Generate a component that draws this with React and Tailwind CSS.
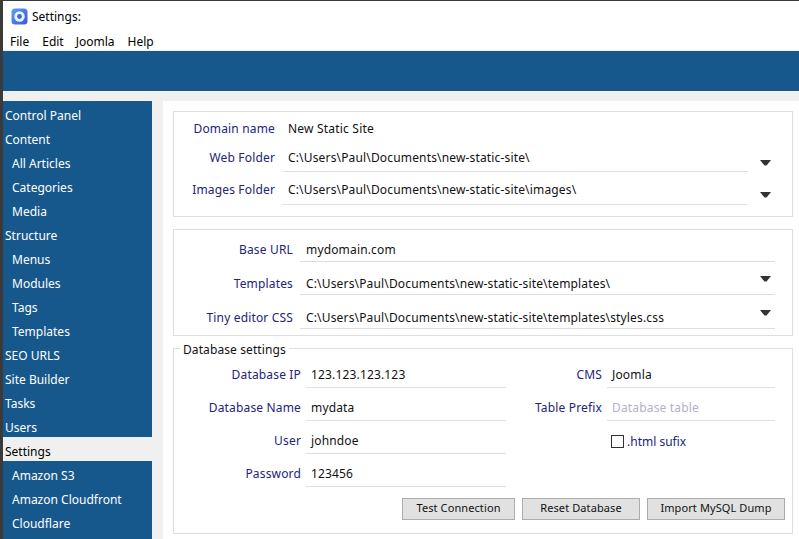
const navItems = [
  { label: 'Control Panel' },
  { label: 'Content' },
  { label: 'All Articles', sub: true },
  { label: 'Categories', sub: true },
  { label: 'Media', sub: true },
  { label: 'Structure' },
  { label: 'Menus', sub: true },
  { label: 'Modules', sub: true },
  { label: 'Tags', sub: true },
  { label: 'Templates', sub: true },
  { label: 'SEO URLS' },
  { label: 'Site Builder' },
  { label: 'Tasks' },
  { label: 'Users' },
  { label: 'Settings', active: true },
  { label: 'Amazon S3', sub: true },
  { label: 'Amazon Cloudfront', sub: true },
  { label: 'Cloudflare', sub: true },
];

function Logo() {
  return (
    <svg width="17" height="17" viewBox="0 0 17 17" className="shrink-0">
      <defs>
        <linearGradient id="logoBg" x1="0" y1="0" x2="1" y2="1">
          <stop offset="0" stopColor="#5aa2ef" />
          <stop offset="1" stopColor="#3b55d8" />
        </linearGradient>
      </defs>
      <rect x="0.5" y="0.5" width="16" height="16" rx="3.5" fill="url(#logoBg)" />
      <circle cx="8.5" cy="8.5" r="5.2" fill="#e9f1fd" />
      <circle cx="8.5" cy="8.5" r="2.4" fill="#3f68d6" />
    </svg>
  );
}

function Arrow({ className }) {
  return (
    <svg width="11" height="6" viewBox="0 0 11 6" className={className}>
      <polygon points="0,0 11,0 6.5,5.5 4.5,5.5" fill="#333333" />
    </svg>
  );
}

function Label({ className = '', children }) {
  return (
    <div className={`shrink-0 pt-px text-right leading-[22px] tracking-[0.16px] whitespace-nowrap text-[#23237a] ${className}`}>
      {children}
    </div>
  );
}

function Field({ className = '', children }) {
  return (
    <div className={`border-b border-[#dedede] pt-px leading-[22px] tracking-[0.16px] whitespace-nowrap text-[#111111] ${className}`}>
      {children}
    </div>
  );
}

function DbRow({ label, value }) {
  return (
    <div className="flex">
      <Label className="w-[127px]">{label}</Label>
      <Field className="ml-[5px] h-[25px] w-[200px] pl-[5px]">{value}</Field>
    </div>
  );
}

export default function App() {
  return (
    <div
      className="flex h-[539px] w-[799px] overflow-hidden bg-[#3a3a3a] pt-px pl-[3px] text-[12px] text-black"
      style={{ fontFamily: '"Noto Sans", "Open Sans", sans-serif' }}
    >
      <div className="flex min-w-0 flex-1 flex-col bg-[#f0f0f0]">
        <div className="flex h-[32px] items-start bg-white pt-[7px] pl-[8px]">
          <Logo />
          <span className="ml-[4px] pt-px leading-[16px]">Settings:</span>
        </div>
        <div className="flex h-[17px] gap-[13px] bg-white pl-[7px] leading-[17px]">
          <span>File</span>
          <span>Edit</span>
          <span className="-ml-px">Joomla</span>
          <span>Help</span>
        </div>
        <div className="h-px bg-[#f0f0f0]" />
        <div className="h-[40px] bg-[#17588c]" />

        <div className="mt-[10px] flex min-h-0 flex-1">
          <nav className="w-[149px] shrink-0 bg-[#17588c] text-white">
            {navItems.map((item) => (
              <div
                key={item.label}
                className={`h-[24px] pt-[4px] leading-[22px] ${item.sub ? 'pl-[9px]' : 'pl-[2px]'} ${item.active ? 'bg-[#f0f0f0] text-black' : ''}`}
              >
                {item.label}
              </div>
            ))}
          </nav>

          <main className="ml-[11px] min-w-0 flex-1 bg-white pt-[10px] pl-[10px]">
            <section className="h-[106px] w-[620px] border border-[#dedede] pt-[5px]">
              <div className="flex">
                <Label className="w-[101px]">Domain name</Label>
                <div className="ml-[13px] pt-px leading-[22px] tracking-[0.2px] text-[#111111]">New Static Site</div>
              </div>
              <div className="mt-[6px] flex">
                <Label className="w-[101px]">Web Folder</Label>
                <Field className="ml-[8px] h-[26px] w-[465px] pl-[5px]">C:\Users\Paul\Documents\new-static-site\</Field>
                <Arrow className="mt-[14px] ml-[12px]" />
              </div>
              <div className="mt-[6px] flex">
                <Label className="w-[101px]">Images Folder</Label>
                <Field className="ml-[7px] h-[27px] w-[465px] pl-[6px]">C:\Users\Paul\Documents\new-static-site\images\</Field>
                <Arrow className="mt-[14px] ml-[13px]" />
              </div>
            </section>

            <section className="mt-[12px] h-[107px] w-[620px] border border-[#dedede] pt-[8px]">
              <div className="flex">
                <Label className="w-[119px]">Base URL</Label>
                <Field className="ml-[7px] h-[24px] w-[475px] pl-[6px]">mydomain.com</Field>
              </div>
              <div className="mt-[10px] flex">
                <Label className="w-[119px]">Templates</Label>
                <div className="relative ml-[7px] w-[475px]">
                  <Field className="h-[23px] pl-[6px]">C:\Users\Paul\Documents\new-static-site\templates\</Field>
                  <Arrow className="absolute top-[4px] left-[460px]" />
                </div>
              </div>
              <div className="mt-[11px] flex">
                <Label className="w-[119px]">Tiny editor CSS</Label>
                <div className="relative ml-[7px] w-[475px]">
                  <Field className="h-[23px] pl-[6px]">C:\Users\Paul\Documents\new-static-site\templates\styles.css</Field>
                  <Arrow className="absolute top-[4px] left-[460px]" />
                </div>
              </div>
            </section>

            <section className="relative mt-[12px] h-[186px] w-[620px] border border-[#dedede] pt-[14px]">
              <div className="absolute -top-[9px] left-[6px] bg-white px-[3px] leading-[20px] tracking-[0.1px] text-[#111111]">
                Database settings
              </div>
              <div className="flex">
                <div className="flex w-[332px] shrink-0 flex-col gap-[8px]">
                  <DbRow label="Database IP" value="123.123.123.123" />
                  <DbRow label="Database Name" value="mydata" />
                  <DbRow label="User" value="johndoe" />
                  <DbRow label="Password" value="123456" />
                </div>
                <div className="flex flex-col gap-[8px]">
                  <div className="flex">
                    <Label className="w-[96px] text-[#7d8aa6]">CMS</Label>
                    <Field className="ml-[5px] h-[25px] w-[168px] pl-[5px]">Joomla</Field>
                  </div>
                  <div className="flex">
                    <Label className="w-[96px] text-[#7d8aa6]">Table Prefix</Label>
                    <Field className="ml-[5px] h-[25px] w-[168px] pl-[5px] text-[#b4b0c8]">Database table</Field>
                  </div>
                  <div className="ml-[105px] flex items-center pt-[2px]">
                    <span className="h-[13px] w-[13px] border border-[#333333] bg-white" />
                    <span className="ml-[3px] pt-px leading-[20px] text-[#23237a]">.html sufix</span>
                  </div>
                </div>
              </div>
              <div className="mt-[11px] mr-[7px] flex justify-end gap-[7px] text-[11px] tracking-[0.1px]">
                <button className="h-[22px] w-[113px] border border-[#adadad] bg-[#e1e1e1] pb-[2px] leading-[18px] text-[#111111]">Test Connection</button>
                <button className="h-[22px] w-[118px] border border-[#adadad] bg-[#e1e1e1] pb-[2px] leading-[18px] text-[#111111]">Reset Database</button>
                <button className="h-[22px] w-[138px] border border-[#adadad] bg-[#e1e1e1] pb-[2px] leading-[18px] text-[#111111]">Import MySQL Dump</button>
              </div>
            </section>
          </main>
        </div>
      </div>
    </div>
  );
}
